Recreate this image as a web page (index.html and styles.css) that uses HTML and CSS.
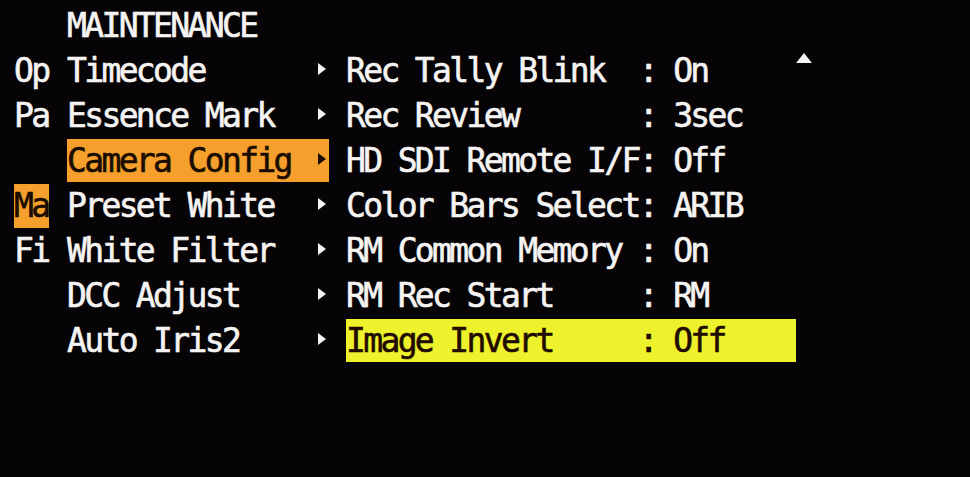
FILE: index.html
```html
<!DOCTYPE html>
<html lang="en">
<head>
  <meta charset="UTF-8">
  <title>Maintenance Menu</title>
  <link rel="stylesheet" href="styles.css">
</head>
<body>
  <div class="screen">
    <div class="row">
      <div class="prefix"></div>
      <div class="title">MAINTENANCE</div>
    </div>

    <div class="row">
      <div class="prefix">Op</div>
      <div class="item">Timecode<span class="arrow"></span></div>
      <div class="setting">Rec Tally Blink  : On</div>
      <div class="scroll-up"></div>
    </div>
    <div class="row">
      <div class="prefix">Pa</div>
      <div class="item">Essence Mark<span class="arrow"></span></div>
      <div class="setting">Rec Review       : 3sec</div>
    </div>
    <div class="row">
      <div class="prefix"></div>
      <div class="item active">Camera Config<span class="arrow"></span></div>
      <div class="setting">HD SDI Remote I/F: Off</div>
    </div>
    <div class="row">
      <div class="prefix"><span class="tab">Ma</span></div>
      <div class="item">Preset White<span class="arrow"></span></div>
      <div class="setting">Color Bars Select: ARIB</div>
    </div>
    <div class="row">
      <div class="prefix">Fi</div>
      <div class="item">White Filter<span class="arrow"></span></div>
      <div class="setting">RM Common Memory : On</div>
    </div>
    <div class="row">
      <div class="prefix"></div>
      <div class="item">DCC Adjust<span class="arrow"></span></div>
      <div class="setting">RM Rec Start     : RM</div>
    </div>
    <div class="row">
      <div class="prefix"></div>
      <div class="item">Auto Iris2<span class="arrow"></span></div>
      <div class="setting selected">Image Invert     : Off</div>
    </div>
  </div>
</body>
</html>
```

FILE: styles.css
```css
body {
  margin: 0;
  background-color: #060407;
  color: #f6f4f2;
  font-family: 'DejaVu Sans Mono', 'Liberation Mono', monospace;
  font-size: 33px;
  letter-spacing: -2.65px;
  -webkit-text-stroke: 0.6px currentColor;
  width: 970px;
  height: 477px;
  overflow: hidden;
}
.screen {
  padding: 3px 0 0 14px;
  display: flex;
  flex-direction: column;
}
.row {
  display: flex;
  align-items: center;
  height: 45px;
  white-space: pre;
}
.prefix {
  width: 53px;
  flex: none;
  display: flex;
  align-items: center;
  height: 45px;
}
.tab {
  display: flex;
  align-items: center;
  height: 44px;
  width: 35px;
  background-color: #f5a02c;
  color: #1a0c00;
}
.title {
  line-height: 45px;
}
.item {
  width: 262px;
  flex: none;
  height: 43px;
  display: flex;
  align-items: center;
  justify-content: space-between;
  box-sizing: border-box;
  padding-right: 3px;
}
.item.active {
  background-color: #f5a02c;
  color: #1a0c00;
}
.arrow {
  width: 0;
  height: 0;
  border-top: 6.5px solid transparent;
  border-bottom: 6.5px solid transparent;
  border-left: 8px solid currentColor;
  margin-top: -4px;
}
.setting {
  margin-left: 17px;
  width: 450px;
  flex: none;
  height: 43px;
  display: flex;
  align-items: center;
  box-sizing: border-box;
  padding-left: 0;
}
.setting.selected {
  background-color: #eef22c;
  color: #220c00;
}
.scroll-up {
  align-self: flex-start;
  margin-top: 5px;
  width: 0;
  height: 0;
  border-left: 8px solid transparent;
  border-right: 8px solid transparent;
  border-bottom: 10px solid #f6f4f2;
}
```
